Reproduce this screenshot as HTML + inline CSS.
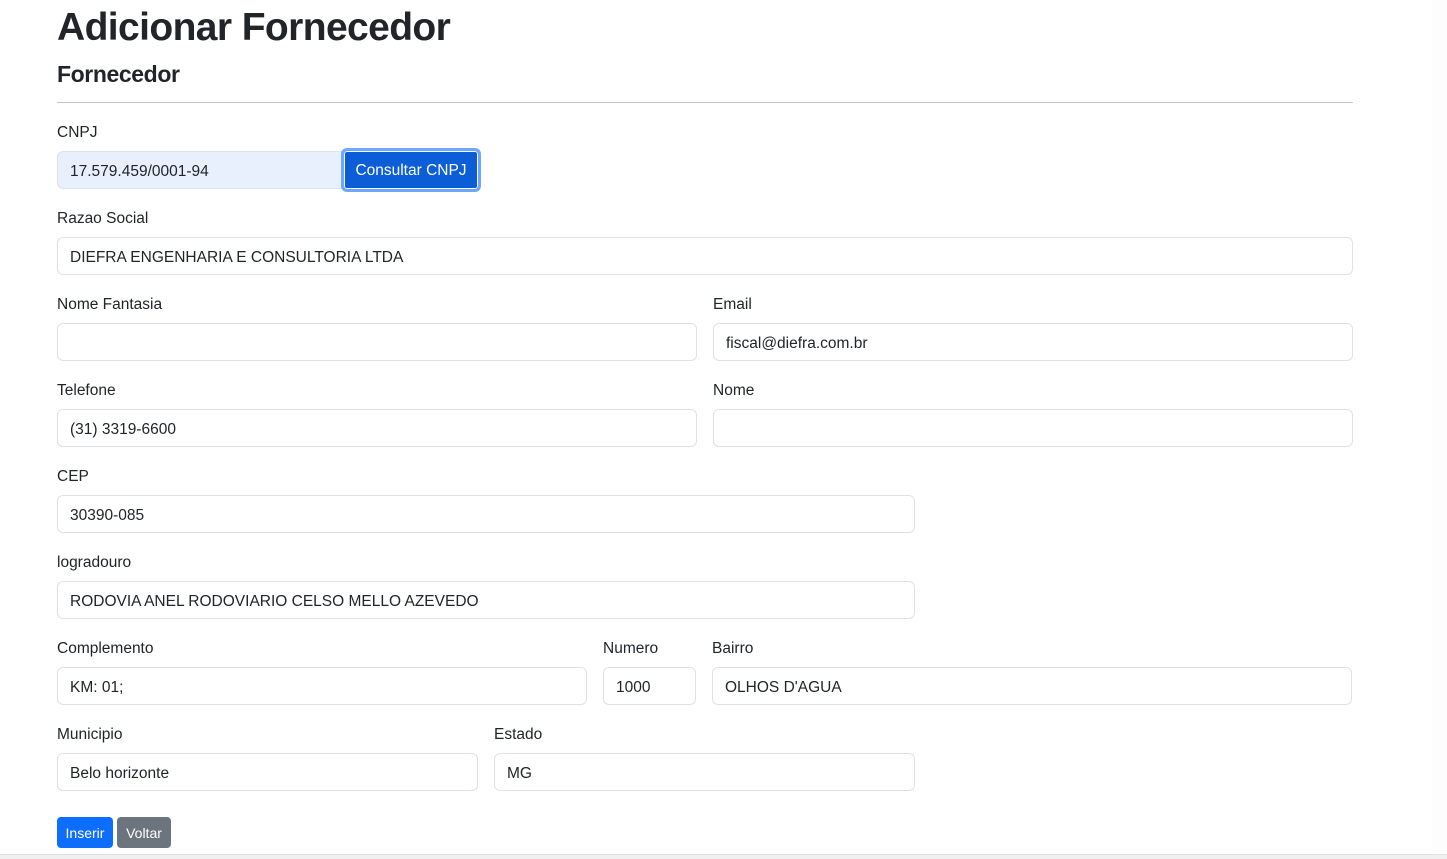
<!DOCTYPE html>
<html><head><meta charset="utf-8"><style>
*{box-sizing:border-box;margin:0;padding:0}
body{width:1447px;height:859px;background:#fff;font-family:"Liberation Sans",sans-serif;color:#212529;position:relative;overflow:hidden}
.a{position:absolute}
h1{position:absolute;left:57px;top:4px;font-size:39px;font-weight:bold;line-height:48px;letter-spacing:-0.6px}
h2{position:absolute;left:57px;top:59px;font-size:23px;font-weight:bold;line-height:30px;letter-spacing:-0.4px}
hr{position:absolute;left:57px;top:102px;width:1296px;border:0;border-top:1px solid #c6c7c8}
.l{position:absolute;font-size:15.5px;line-height:20px;margin-top:2px}
.i{position:absolute;height:38px;border:1px solid #dee2e6;border-radius:6px;font-size:15.5px;line-height:39px;padding-left:12px;background:#fff}
.b{position:absolute;color:#fff;font-size:14px;border-radius:4px;text-align:center;line-height:32px;height:31px;top:817px}
</style></head><body>
<h1>Adicionar Fornecedor</h1>
<h2>Fornecedor</h2>
<hr>
<div class="l" style="left:57px;top:121px">CNPJ</div>
<div class="i" style="left:57px;top:151px;width:289px;background:#e8f0fe;border-radius:6px 0 0 6px">17.579.459/0001-94</div>
<div class="a" style="left:341px;top:148px;width:140px;height:44px;border:3px solid #6ea8fe;border-radius:6px;background:#0b5ed7;color:#fff;font-size:15.5px;text-align:center;line-height:40px;box-shadow:inset 0 0 0 1px #fff">Consultar CNPJ</div>
<div class="l" style="left:57px;top:207px">Razao Social</div>
<div class="i" style="left:57px;top:237px;width:1296px">DIEFRA ENGENHARIA E CONSULTORIA LTDA</div>
<div class="l" style="left:57px;top:293px">Nome Fantasia</div>
<div class="i" style="left:57px;top:323px;width:640px"></div>
<div class="l" style="left:713px;top:293px">Email</div>
<div class="i" style="left:713px;top:323px;width:640px">fiscal@diefra.com.br</div>
<div class="l" style="left:57px;top:379px">Telefone</div>
<div class="i" style="left:57px;top:409px;width:640px">(31) 3319-6600</div>
<div class="l" style="left:713px;top:379px">Nome</div>
<div class="i" style="left:713px;top:409px;width:640px"></div>
<div class="l" style="left:57px;top:465px">CEP</div>
<div class="i" style="left:57px;top:495px;width:858px">30390-085</div>
<div class="l" style="left:57px;top:551px">logradouro</div>
<div class="i" style="left:57px;top:581px;width:858px">RODOVIA ANEL RODOVIARIO CELSO MELLO AZEVEDO</div>
<div class="l" style="left:57px;top:637px">Complemento</div>
<div class="i" style="left:57px;top:667px;width:530px">KM: 01;</div>
<div class="l" style="left:603px;top:637px">Numero</div>
<div class="i" style="left:603px;top:667px;width:93px">1000</div>
<div class="l" style="left:712px;top:637px">Bairro</div>
<div class="i" style="left:712px;top:667px;width:640px">OLHOS D'AGUA</div>
<div class="l" style="left:57px;top:723px">Municipio</div>
<div class="i" style="left:57px;top:753px;width:421px">Belo horizonte</div>
<div class="l" style="left:494px;top:723px">Estado</div>
<div class="i" style="left:494px;top:753px;width:421px">MG</div>
<div class="b" style="left:57px;width:56px;background:#0d6efd">Inserir</div>
<div class="b" style="left:117px;width:54px;background:#6c757d">Voltar</div>
<div class="a" style="left:1432px;top:0;width:15px;height:854px;background:#fdfdfd"></div>
<div class="a" style="left:0;top:854px;width:1447px;height:5px;background:#f0f0f0;border-top:1px solid #e2e2e2"></div>
</body></html>
